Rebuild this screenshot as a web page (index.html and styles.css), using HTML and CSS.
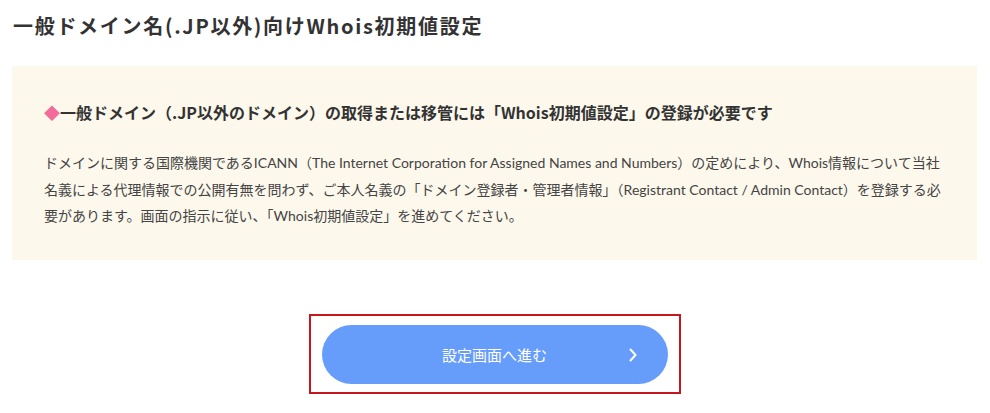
FILE: index.html
```html
<!DOCTYPE html>
<html lang="ja">
<head>
    <meta charset="UTF-8">
    <meta name="viewport" content="width=device-width, initial-scale=1.0">
    <title>Whois初期値設定</title>
    <link rel="stylesheet" href="styles.css">
</head>
<body>
    <div class="page">
        <h1 class="page-title">一般ドメイン名(.JP以外)向けWhois初期値設定</h1>
        <div class="notice">
            <p class="notice-title"><span class="mark">◆</span>一般ドメイン（.JP以外のドメイン）の取得または移管には「Whois初期値設定」の登録が必要です</p>
            <p class="notice-text">ドメインに関する国際機関であるICANN（The Internet Corporation for Assigned Names and Numbers）の定めにより、Whois情報について当社名義による代理情報での公開有無を問わず、ご本人名義の「ドメイン登録者・管理者情報」（Registrant Contact / Admin Contact）を登録する必要があります。画面の指示に従い、「Whois初期値設定」を進めてください。</p>
        </div>
        <div class="button-frame">
            <a class="next-button" href="#">
                設定画面へ進む
                <svg class="chevron" width="10" height="14" viewBox="0 0 10 14">
                    <path d="M2.5 1.5 L7.5 7 L2.5 12.5" fill="none" stroke="#fff" stroke-width="2" stroke-linecap="round" stroke-linejoin="round"/>
                </svg>
            </a>
        </div>
    </div>
</body>
</html>
```

FILE: styles.css
```css
body {
    margin: 0;
    background: #fff;
    color: #333;
    font-family: Lato, "Noto Sans CJK JP", sans-serif;
}
.page {
    padding: 12px 13px 0 12px;
}
.page-title {
    margin: 0 0 26px 1px;
    font-family: "Noto Sans CJK JP", sans-serif;
    font-size: 20px;
    line-height: 28px;
    font-weight: bold;
    letter-spacing: 1.7px;
    color: #333;
}
.notice {
    background-color: #fdf8ec;
    padding: 34px 32px 30px;
}
.notice-title {
    margin: 0 0 26px;
    font-family: "Noto Sans CJK JP", sans-serif;
    font-size: 16px;
    line-height: 24px;
    font-weight: bold;
    color: #333;
}
.mark {
    color: #f26b9b;
}
.notice-text {
    margin: 0;
    font-size: 14px;
    line-height: 26.5px;
    color: #444;
}
.button-frame {
    width: 372px;
    box-sizing: border-box;
    margin: 54px auto 0;
    padding: 9px 11px 8px;
    border: 2px solid #c8161d;
}
.next-button {
    position: relative;
    display: flex;
    justify-content: center;
    align-items: center;
    height: 59px;
    border-radius: 30px;
    background-color: #679dfa;
    color: #fff;
    font-family: "Noto Sans CJK JP", sans-serif;
    font-size: 15px;
    text-decoration: none;
}
.chevron {
    position: absolute;
    right: 30px;
    top: 23px;
}
```
